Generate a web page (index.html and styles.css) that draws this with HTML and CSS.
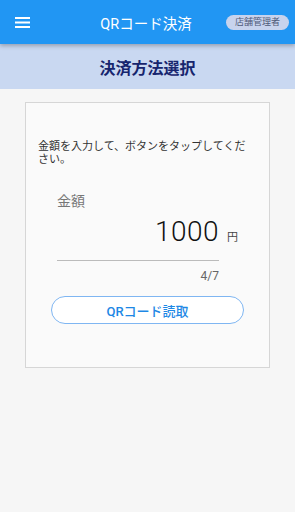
FILE: index.html
```html
<!DOCTYPE html>
<html lang="ja">
<head>
<meta charset="utf-8">
<link rel="stylesheet" href="styles.css">
</head>
<body>
<header class="appbar">
  <button class="menu" aria-label="menu">
    <svg width="15" height="11" viewBox="0 0 15 11"><rect x="0" y="0" width="15" height="2" fill="#fff"/><rect x="0" y="4.5" width="15" height="2" fill="#fff"/><rect x="0" y="9" width="15" height="2" fill="#fff"/></svg>
  </button>
  <div class="title">QRコード決済</div>
  <div class="badge">店舗管理者</div>
</header>
<div class="subbar">決済方法選択</div>
<main class="content">
  <section class="card">
    <p class="lead">金額を入力して、ボタンをタップしてください。</p>
    <div class="field">
      <div class="label">金額</div>
      <div class="amount-row">
        <span class="amount">1000</span>
        <span class="unit">円</span>
      </div>
      <div class="line"></div>
      <div class="counter">4/7</div>
    </div>
    <button class="qr-btn">QRコード読取</button>
  </section>
</main>
</body>
</html>
```
FILE: styles.css
```css
* { box-sizing: border-box; }
html, body { margin: 0; padding: 0; }
body {
  width: 295px;
  height: 512px;
  background: #f6f6f6;
  font-family: Roboto, "Noto Sans CJK JP", sans-serif;
  overflow: hidden;
}
.appbar {
  position: relative;
  z-index: 2;
  height: 44px;
  background: #2196f3;
  display: flex;
  align-items: center;
  padding: 0 6px 0 15px;
  box-shadow: 0 2px 4px rgba(0,0,0,0.25);
}
.menu {
  border: 0;
  background: none;
  padding: 0;
  width: 15px;
  height: 11px;
  display: flex;
}
.title {
  flex: 1;
  text-align: center;
  color: #fff;
  font-size: 14.5px;
  padding-left: 36px;
}
.badge {
  background: #c7d3ed;
  color: #4f5a78;
  font-size: 9px;
  height: 15px;
  line-height: 15px;
  padding: 0 9px;
  border-radius: 8px;
  margin-top: 1px;
}
.subbar {
  height: 45px;
  background: #c9d8f1;
  color: #17256e;
  font-weight: bold;
  font-size: 16px;
  display: flex;
  align-items: center;
  justify-content: center;
}
.content {
  padding: 13px 25px 0 25px;
}
.card {
  width: 245px;
  height: 266px;
  background: #fafafa;
  border: 1px solid #d6d6d6;
  padding: 37px 20px 0 12px;
}
.lead {
  margin: 0;
  font-size: 11px;
  line-height: 13px;
  color: #333;
}
.field {
  padding: 26px 0 0 19px;
  width: 200px;
}
.label {
  font-size: 14px;
  color: #777;
  line-height: 18px;
}
.amount-row {
  display: flex;
  align-items: baseline;
  justify-content: flex-end;
  margin-top: 4px;
  margin-right: 0;
}
.amount {
  font-size: 28px;
  font-weight: 300;
  color: #111;
  line-height: 36px;
  letter-spacing: 0.5px;
}
.unit {
  font-size: 11px;
  color: #444;
  margin-left: 8px;
}
.line {
  width: 162px;
  height: 1px;
  background: #bbb;
  margin-top: 10px;
}
.counter {
  width: 162px;
  text-align: right;
  font-size: 12px;
  color: #666;
  margin-top: 8px;
}
.qr-btn {
  display: block;
  margin: 13px 0 0 13px;
  width: 193px;
  height: 28px;
  border: 1px solid #7fb6f2;
  border-radius: 14px;
  background: #fff;
  color: #1e88e5;
  font-family: Roboto, "Noto Sans CJK JP", sans-serif;
  font-size: 13px;
  font-weight: 500;
}
```
